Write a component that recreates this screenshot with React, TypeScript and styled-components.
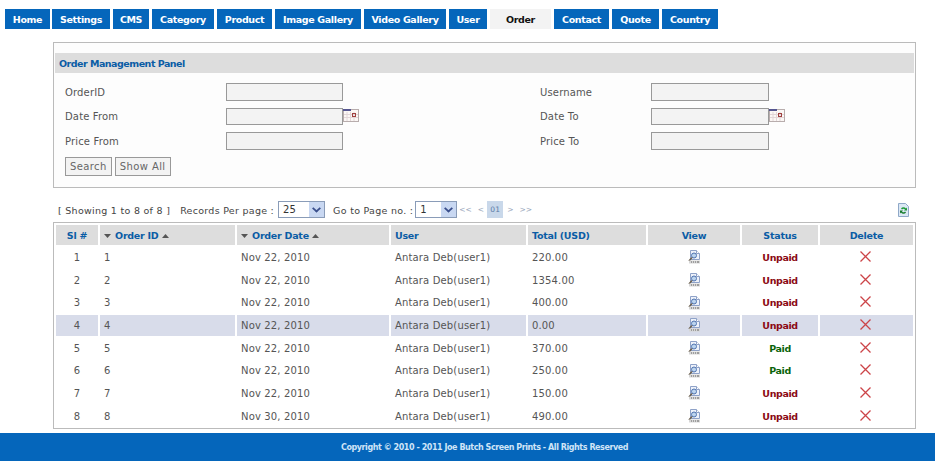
import React from 'react';
import styled, { createGlobalStyle } from 'styled-components';

const tabs = [
  { label: 'Home', width: 45 },
  { label: 'Settings', width: 58 },
  { label: 'CMS', width: 36 },
  { label: 'Category', width: 62 },
  { label: 'Product', width: 55 },
  { label: 'Image Gallery', width: 86 },
  { label: 'Video Gallery', width: 82 },
  { label: 'User', width: 38 },
  { label: 'Order', width: 61, active: true },
  { label: 'Contact', width: 55 },
  { label: 'Quote', width: 47 },
  { label: 'Country', width: 56 },
];

const orders = [
  { id: 1, date: 'Nov 22, 2010', total: '220.00', paid: false },
  { id: 2, date: 'Nov 22, 2010', total: '1354.00', paid: false },
  { id: 3, date: 'Nov 22, 2010', total: '400.00', paid: false },
  { id: 4, date: 'Nov 22, 2010', total: '0.00', paid: false, hover: true },
  { id: 5, date: 'Nov 22, 2010', total: '370.00', paid: true },
  { id: 6, date: 'Nov 22, 2010', total: '250.00', paid: true },
  { id: 7, date: 'Nov 22, 2010', total: '150.00', paid: false },
  { id: 8, date: 'Nov 30, 2010', total: '490.00', paid: false },
];

const CalendarIcon = () => (
  <CalendarSvg viewBox="0 0 16 13" width="16" height="13">
    <rect x="0.5" y="0.5" width="15" height="12" fill="#fbf7f5" stroke="#b8adad" />
    <rect x="0" y="0" width="8" height="2" fill="#55558f" />
    <path d="M4 3v9M7.500 3v9M11 3v9M1 5.500h14M1 8.500h14" stroke="#e2d6d8" fill="none" />
    <rect x="9.500" y="4.500" width="3" height="3" fill="none" stroke="#a04040" />
  </CalendarSvg>
);

const SortDown = () => (
  <SortDownSvg viewBox="0 0 7 4" width="7" height="4">
    <path d="M0 0h7L3.500 4z" fill="#555" />
  </SortDownSvg>
);

const SortUp = () => (
  <SortSvg viewBox="0 0 7 4" width="7" height="4">
    <path d="M0 4h7L3.500 0z" fill="#555" />
  </SortSvg>
);

const ViewIcon = () => (
  <svg viewBox="0 0 12 14" width="12" height="14">
    <path d="M2.500 0.500h6l3 3v6h-9z" fill="#eef2fa" stroke="#8fa2c8" />
    <path d="M8.500 0.500v3h3" fill="#fff" stroke="#8fa2c8" />
    <circle cx="6" cy="5.500" r="2.500" fill="#bcd4ee" stroke="#4f74b0" />
    <path d="M4 7.500L1 11" stroke="#6a5e4c" strokeWidth="1.500" />
    <path d="M1 10.500h11v3H1z" fill="#d6d6d6" />
    <path d="M3 12h1M5 12h1M7 12h1M9 12h2" stroke="#666" />
  </svg>
);

const DeleteIcon = () => (
  <DeleteSvg viewBox="0 0 11 11" width="11" height="11">
    <path d="M0.500 0.500L10.500 10.500M10.500 0.500L0.500 10.500" stroke="#cc4448" strokeWidth="1.300" fill="none" />
  </DeleteSvg>
);

const ExportIcon = () => (
  <svg viewBox="0 0 11 14" width="11" height="14">
    <path d="M0.500 0.500h7l3 3v10h-10z" fill="#dce8f4" stroke="#8fa8c8" />
    <path d="M3 5.500a3 3 0 0 1 5 0l1-1v3H6l1-1a2 2 0 0 0-3 0z" fill="#1f9a3a" />
    <path d="M8 9.500a3 3 0 0 1-5 0l-1 1v-3h3l-1 1a2 2 0 0 0 3 0z" fill="#137a2a" />
  </svg>
);

const App: React.FC = () => {
  return (
    <>
      <GlobalStyle />
      <Nav>
        {tabs.map((tab) => (
          <Tab key={tab.label} $width={tab.width} $active={tab.active}>
            {tab.label}
          </Tab>
        ))}
      </Nav>

      <Panel>
        <PanelTitle>Order Management Panel</PanelTitle>
        <SearchForm>
          <Label>OrderID</Label>
          <Field><Input /></Field>
          <Label>Username</Label>
          <Field><Input $wide /></Field>

          <Label>Date From</Label>
          <Field><Input /><CalendarIcon /></Field>
          <Label>Date To</Label>
          <Field><Input $wide /><CalendarIcon /></Field>

          <Label>Price From</Label>
          <Field><Input /></Field>
          <Label>Price To</Label>
          <Field><Input $wide /></Field>

          <Buttons>
            <Button type="button">Search</Button>
            <Button type="button">Show All</Button>
          </Buttons>
        </SearchForm>
      </Panel>

      <Toolbar>
        <ToolText $gap={10}>[ Showing 1 to 8 of 8 ]</ToolText>
        <ToolText $gap={4}>Records Per page :</ToolText>
        <SelectBox $width={47}>
          <Select defaultValue="25"><option>25</option></Select>
          <SelectArrow />
        </SelectBox>
        <ToolText $gap={2}>Go to Page no. :</ToolText>
        <SelectBox $width={42}>
          <Select defaultValue="1"><option>1</option></Select>
          <SelectArrow />
        </SelectBox>
        <Pager>
          <PagerLink $gap={6}>&lt;&lt;</PagerLink>
          <PagerLink $gap={3}>&lt;</PagerLink>
          <CurrentPage>01</CurrentPage>
          <PagerLink $gap={6}>&gt;</PagerLink>
          <PagerLink $gap={0}>&gt;&gt;</PagerLink>
        </Pager>
        <ExportLink><ExportIcon /></ExportLink>
      </Toolbar>

      <TableBox>
        <Table>
          <colgroup>
            <col width="42" />
            <col width="135" />
            <col width="152" />
            <col width="135" />
            <col width="118" />
            <col width="92" />
            <col width="76" />
            <col width="93" />
          </colgroup>
          <thead>
            <tr>
              <Th $center>Sl #</Th>
              <Th><SortDown /> Order ID <SortUp /></Th>
              <Th><SortDown /> Order Date <SortUp /></Th>
              <Th>User</Th>
              <Th>Total (USD)</Th>
              <Th $center>View</Th>
              <Th $center>Status</Th>
              <Th $center>Delete</Th>
            </tr>
          </thead>
          <tbody>
            {orders.map((order) => (
              <Row key={order.id} $hover={order.hover}>
                <Td $center>{order.id}</Td>
                <Td>{order.id}</Td>
                <Td>{order.date}</Td>
                <Td>Antara Deb(user1)</Td>
                <Td>{order.total}</Td>
                <Td $center><ViewIcon /></Td>
                <Td $center><Status $paid={order.paid}>{order.paid ? 'Paid' : 'Unpaid'}</Status></Td>
                <Td $center><DeleteIcon /></Td>
              </Row>
            ))}
          </tbody>
        </Table>
      </TableBox>

      <Footer>Copyright © 2010 - 2011 Joe Butch Screen Prints - All Rights Reserved</Footer>
    </>
  );
};

const GlobalStyle = createGlobalStyle`
  html, body {
    margin: 0;
    padding: 0;
    background: #fff;
    font-family: "DejaVu Sans", Verdana, sans-serif;
    font-size: 10px;
    color: #444;
  }
`;

const Nav = styled.nav`
  display: flex;
  gap: 3px;
  padding: 9px 0 0 5px;
`;

const Tab = styled.a<{ $width: number; $active?: boolean }>`
  display: block;
  flex: none;
  width: ${(p) => p.$width}px;
  height: 20px;
  line-height: 21px;
  text-align: center;
  font-size: 9.500px;
  font-weight: bold;
  letter-spacing: -0.350px;
  color: ${(p) => (p.$active ? '#111' : '#fff')};
  background: ${(p) => (p.$active ? '#f3f3f3' : '#0566bb')};
  &:first-child { margin-right: -1px; }
`;

const Panel = styled.section`
  margin: 13px 0 0 53px;
  width: 861px;
  height: 134px;
  padding-top: 10px;
  border: 1px solid #bbb;
  background: #fdfdfd;
`;

const PanelTitle = styled.h2`
  margin: 0 1px;
  padding-left: 4px;
  height: 20px;
  line-height: 21px;
  background: #ddd;
  font-size: 9.500px;
  font-weight: bold;
  letter-spacing: -0.500px;
  color: #0a5ca5;
`;

const SearchForm = styled.form`
  display: grid;
  grid-template-columns: 161px 314px 111px 1fr;
  grid-auto-rows: 18px;
  row-gap: 6.500px;
  padding: 10px 0 0 11px;
`;

const Label = styled.label`
  align-self: center;
  letter-spacing: 0.150px;
  color: #555;
`;

const Field = styled.div`
  display: flex;
  align-items: flex-start;
`;

const Input = styled.input<{ $wide?: boolean }>`
  box-sizing: border-box;
  width: ${(p) => (p.$wide ? 118 : 117)}px;
  height: 17.500px;
  padding: 0 2px;
  border: 1px solid #999;
  background: #f3f3f3;
`;

const CalendarSvg = styled.svg`
  margin-top: 1px;
`;

const Buttons = styled.div`
  grid-column: 1 / -1;
  display: flex;
  gap: 3px;
  height: 19px;
`;

const Button = styled.button`
  box-sizing: border-box;
  height: 19px;
  padding: 0 4px;
  border: 1px solid #999;
  background: #f3f3f3;
  font: inherit;
  letter-spacing: 0.400px;
  color: #666;
`;

const Toolbar = styled.div`
  display: flex;
  align-items: center;
  width: 851px;
  height: 17px;
  margin: 13px 0 0 58px;
`;

const ToolText = styled.span<{ $gap: number }>`
  margin-right: ${(p) => p.$gap}px;
  padding-top: 1px;
  font-size: 9.500px;
  letter-spacing: 0.280px;
  white-space: nowrap;
`;

const SelectBox = styled.div<{ $width: number }>`
  position: relative;
  flex: none;
  width: ${(p) => p.$width}px;
  height: 17px;
  margin-right: 8px;
`;

const Select = styled.select`
  box-sizing: border-box;
  width: 100%;
  height: 100%;
  padding: 0 4px;
  border: 1px solid #8a9cb8;
  border-radius: 0;
  appearance: none;
  background: #fff;
  font: inherit;
  font-size: 10px;
  color: #333;
`;

const SelectArrow = styled.span`
  position: absolute;
  top: 1px;
  right: 1px;
  width: 15px;
  height: 15px;
  background: #c9d8f2;
  &::after {
    content: '';
    position: absolute;
    left: 4px;
    top: 3px;
    width: 5px;
    height: 5px;
    border-right: 2px solid #3a4f8c;
    border-bottom: 2px solid #3a4f8c;
    transform: scale(0.9, 0.8) rotate(45deg);
  }
`;

const Pager = styled.div`
  display: flex;
  align-items: center;
  margin-left: -6px;
  font-size: 7.500px;
  color: #9aa8bc;
`;

const PagerLink = styled.span<{ $gap: number }>`
  margin-right: ${(p) => p.$gap}px;
`;

const CurrentPage = styled.span`
  display: block;
  width: 16px;
  height: 17px;
  margin-right: 4px;
  line-height: 17px;
  text-align: center;
  background: #c9d8ea;
  color: #5a7ca8;
`;

const ExportLink = styled.a`
  margin-left: auto;
  display: flex;
`;

const TableBox = styled.div`
  width: 861px;
  height: 205px;
  margin: 4px 0 0 53px;
  border: 1px solid #bbb;
`;

const Table = styled.table`
  table-layout: fixed;
  width: 861px;
  border-spacing: 2px;
  border-collapse: separate;
`;

const Th = styled.th<{ $center?: boolean }>`
  height: 20px;
  padding: 0 ${(p) => (p.$center ? 0 : 4)}px;
  text-align: ${(p) => (p.$center ? 'center' : 'left')};
  background: #ddd;
  font-size: 9.500px;
  font-weight: bold;
  letter-spacing: -0.250px;
  color: #0a5ca5;
`;

const SortSvg = styled.svg`
  vertical-align: 1px;
`;

const SortDownSvg = styled(SortSvg)`
  margin-right: 1px;
`;

const Row = styled.tr<{ $hover?: boolean }>`
  background: ${(p) => (p.$hover ? '#d8dcea' : 'transparent')};
`;

const Td = styled.td<{ $center?: boolean }>`
  height: 20.700px;
  padding: 0 ${(p) => (p.$center ? 0 : 4)}px;
  text-align: ${(p) => (p.$center ? 'center' : 'left')};
  letter-spacing: 0.150px;
  color: #555;
  svg { display: block; margin: 0 auto; }
`;

const DeleteSvg = styled.svg`
  position: relative;
  top: -1px;
  left: -1px;
`;

const Status = styled.span<{ $paid?: boolean }>`
  font-size: 9.500px;
  font-weight: bold;
  letter-spacing: -0.400px;
  color: ${(p) => (p.$paid ? '#0a640a' : '#8b0a14')};
`;

const Footer = styled.footer`
  height: 28px;
  margin-top: 4px;
  padding-left: 34px;
  line-height: 29px;
  text-align: center;
  background: #0566bb;
  font-size: 8px;
  font-weight: bold;
  letter-spacing: -0.440px;
  color: #cfe4f7;
`;

export default App;
